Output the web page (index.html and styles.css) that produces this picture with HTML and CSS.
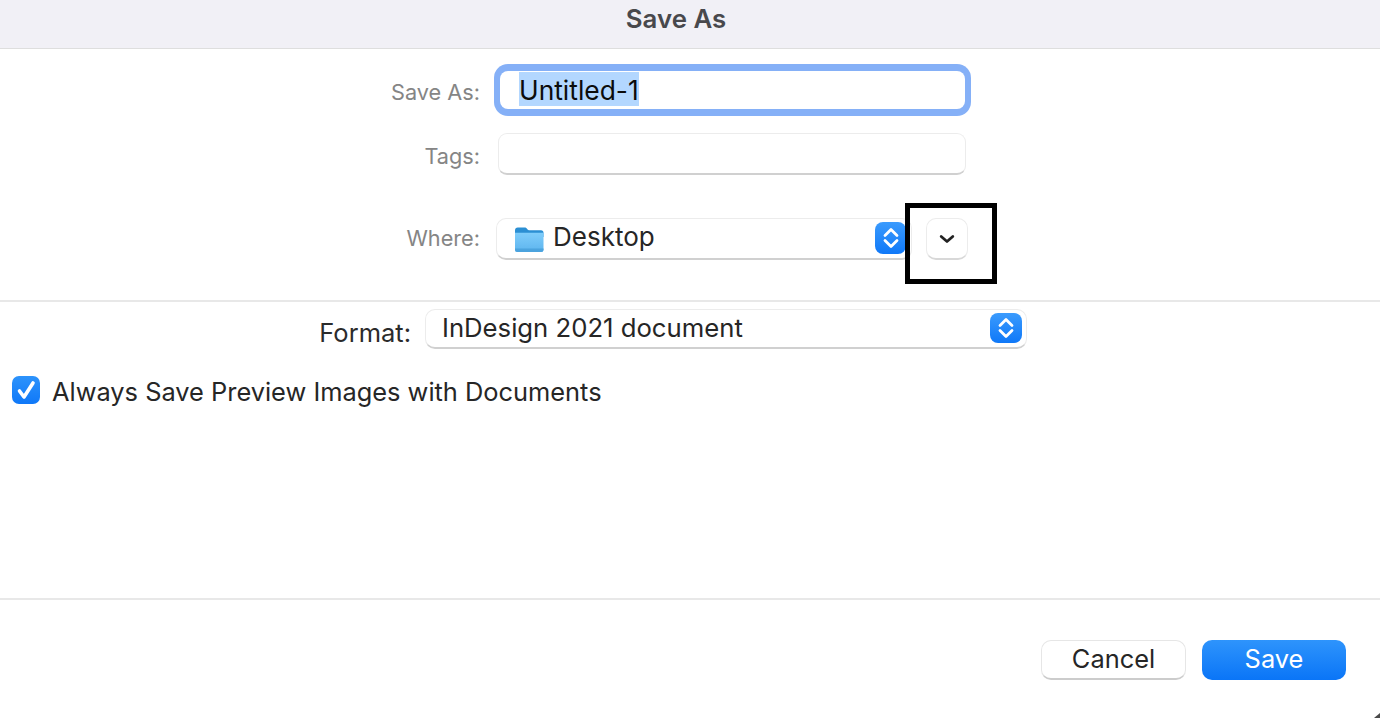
FILE: index.html
```html
<!DOCTYPE html>
<html lang="en">
<head>
<meta charset="utf-8">
<title>Save As</title>
<link rel="stylesheet" href="styles.css">
</head>
<body>
<div class="dialog">
  <header class="titlebar">Save As</header>
  <section class="top">
    <div class="row row-name">
      <span class="label">Save As:</span>
      <div class="name-focus"><div class="name-field"><span class="selection">Untitled-1</span></div></div>
    </div>
    <div class="row row-tags">
      <span class="label">Tags:</span>
      <div class="tags-field"></div>
    </div>
    <div class="row row-where">
      <span class="label">Where:</span>
      <div class="popup where-popup">
        <svg class="folder" width="30" height="28" viewBox="0 0 30 28">
          <defs><linearGradient id="fg" x1="0" y1="0" x2="0" y2="1"><stop offset="0" stop-color="#7fcdfb"/><stop offset="1" stop-color="#5db4ee"/></linearGradient></defs>
          <path d="M1 5.5C1 3.6 2 2.6 3.8 2.6H10.5C12 2.6 12.6 3.2 13.4 4.2C14 4.9 14.6 5.2 15.6 5.2H27C28.6 5.2 29.500 6 29.500 7.800V12H1Z" fill="#2b8fd3"/>
          <path d="M1 7.700H29.500V24.500C29.500 26.200 28.600 27 27 27H3.500C1.900 27 1 26.200 1 24.500Z" fill="url(#fg)"/>
          <path d="M1 23.500H29.500V24.500C29.500 26.200 28.600 27 27 27H3.500C1.900 27 1 26.200 1 24.500Z" fill="#4ba3de"/>
        </svg>
        <span class="popup-text">Desktop</span>
        <span class="stepper where-stepper">
          <svg width="16" height="24" viewBox="0 0 16 24"><path d="M2 9.500L8 3.500L14 9.500M2 14.500L8 20.500L14 14.500" fill="none" stroke="#fff" stroke-width="2.800" stroke-linecap="round" stroke-linejoin="round"/></svg>
        </span>
      </div>
      <button class="expand" type="button" aria-label="Expand">
        <svg width="16" height="10" viewBox="0 0 16 10"><path d="M2.200 2.500L8 7.500L13.800 2.500" fill="none" stroke="#222" stroke-width="2.800" stroke-linecap="round" stroke-linejoin="round"/></svg>
      </button>
      <div class="highlight"></div>
    </div>
  </section>
  <section class="middle">
    <div class="row-format">
      <span class="format-label">Format:</span>
      <div class="popup format-popup">
        <span class="format-text">InDesign 2021 document</span>
        <span class="stepper format-stepper">
          <svg width="16" height="24" viewBox="0 0 16 24"><path d="M2 9.500L8 3.500L14 9.500M2 14.500L8 20.500L14 14.500" fill="none" stroke="#fff" stroke-width="2.800" stroke-linecap="round" stroke-linejoin="round"/></svg>
        </span>
      </div>
    </div>
    <div class="row-check">
      <span class="checkbox">
        <svg width="28" height="28" viewBox="0 0 28 28"><path d="M7.500 15L12 21L21 7" fill="none" stroke="#fff" stroke-width="3.600" stroke-linecap="round" stroke-linejoin="round"/></svg>
      </span>
      <span class="check-text">Always Save Preview Images with Documents</span>
    </div>
  </section>
  <footer class="actions">
    <button class="btn cancel" type="button">Cancel</button>
    <button class="btn save" type="button">Save</button>
  </footer>
  <div class="corner"></div>
</div>
</body>
</html>
```
FILE: styles.css
```css
* { box-sizing: border-box; }
html, body { margin: 0; height: 100%; }
body {
  background: #fff;
  font-family: Inter, "Liberation Sans", sans-serif;
  color: #262626;
  overflow: hidden;
}
.dialog { position: relative; width: 1380px; height: 718px; display: flex; flex-direction: column; }
.titlebar {
  height: 49px;
  flex: none;
  padding: 1px 28px 0 0;
  background: #f1f0f6;
  border-bottom: 1px solid #dedede;
  color: #48484c;
  font-size: 25.800px;
  font-weight: 600;
  line-height: 36px;
  text-align: center;
}
.top {
  height: 253px;
  flex: none;
  border-bottom: 2px solid #e8e8e8;
}
.row { display: flex; align-items: center; }
.label {
  width: 480px;
  flex: none;
  text-align: right;
  color: #858585;
  font-size: 21.700px;
  line-height: 28px;
}
.row-name { height: 52px; margin-top: 15px; }
.row-name .label, .row-tags .label { padding-top: 4px; }
.row-where .label { padding-bottom: 2px; }
.name-focus {
  width: 477px;
  height: 52px;
  margin-left: 14px;
  padding: 7px 6px;
  border-radius: 14px;
  background: #85b0f7;
}
.name-field {
  height: 38px;
  padding: 1px 0 0 19px;
  border-radius: 8px;
  background: #fff;
  display: flex;
  align-items: flex-start;
}
.selection {
  background: #b3d7ff;
  color: #0c0c0c;
  font-size: 26.400px;
  line-height: 36px;
  height: 34px;
}
.row-tags { height: 42px; margin-top: 17px; }
.tags-field {
  width: 468px;
  height: 42px;
  margin-left: 18px;
  border-radius: 9px;
  background: #fff;
  border: 1px solid #ececec;
  border-bottom: 2px solid #d0d0d0;
}
.row-where { position: relative; height: 42px; margin-top: 43px; }
.popup {
  display: flex;
  align-items: center;
  background: #fff;
  border-radius: 10px;
  border: 1px solid #ececec;
  border-bottom: 2px solid #d0d0d0;
}
.where-popup {
  width: 416px;
  height: 42px;
  margin-left: 16px;
  padding: 0 5px 2px 17px;
}
.folder { flex: none; margin-top: 2px; }
.popup-text {
  margin-left: 9px;
  flex: 1;
  color: #262626;
  font-size: 26px;
  line-height: 34px;
  margin-top: -1px;
}
.stepper {
  flex: none;
  display: flex;
  align-items: center;
  justify-content: center;
  border-radius: 8px;
  background: linear-gradient(#3b9bfd, #0f78f8);
}
.where-stepper { width: 31px; height: 32px; }
.expand {
  width: 42px;
  height: 42px;
  margin-left: 14px;
  padding: 0;
  display: flex;
  align-items: center;
  justify-content: center;
  background: #fff;
  border-radius: 10px;
  border: 1px solid #ececec;
  border-bottom: 2px solid #d8d8d8;
}
.highlight {
  position: absolute;
  left: 905px;
  top: -15px;
  width: 92px;
  height: 81px;
  border: 5px solid #000;
}
.middle { height: 298px; flex: none; border-bottom: 2px solid #e8e8e8; }
.row-format { display: flex; align-items: flex-start; height: 40px; margin-top: 7px; }
.format-label {
  width: 411px;
  flex: none;
  margin-top: 9px;
  text-align: right;
  font-size: 25.500px;
  line-height: 30px;
  color: #2b2b2b;
}
.format-popup {
  width: 602px;
  height: 40px;
  margin-left: 14px;
  padding: 0 4px 2px 16px;
}
.format-text {
  flex: 1;
  font-size: 25.700px;
  line-height: 32px;
  margin-top: 1px;
  color: #262626;
}
.format-stepper { width: 32px; height: 30px; }
.row-check {
  display: flex;
  align-items: center;
  height: 28px;
  margin: 27px 0 0 12px;
}
.checkbox {
  width: 28px;
  height: 28px;
  flex: none;
  display: flex;
  align-items: center;
  justify-content: center;
  border-radius: 7px;
  background: linear-gradient(#2d93fb, #0f78f8);
}
.check-text { margin: 3px 0 0 12px; font-size: 25.400px; line-height: 32px; color: #262626; }
.actions {
  flex: 1;
  display: flex;
  justify-content: flex-end;
  gap: 16px;
  padding: 40px 34px 0 0;
}
.btn {
  width: 144px;
  height: 40px;
  padding: 0 0 2px;
  border-radius: 10px;
  font-family: inherit;
  font-size: 25.400px;
  line-height: 34px;
}
.cancel {
  width: 145px;
  background: #fff;
  color: #262626;
  border: 1px solid #e6e6e6;
  border-bottom: 2px solid #cccccc;
}
.save {
  border: 0;
  color: #fff;
  background: linear-gradient(#2e94fc, #0a75f7);
}
.corner {
  position: absolute;
  right: 0;
  bottom: 0;
  width: 6px;
  height: 5px;
  background: #4a4a4a;
  clip-path: polygon(100% 0, 100% 100%, 0 100%);
}
```
